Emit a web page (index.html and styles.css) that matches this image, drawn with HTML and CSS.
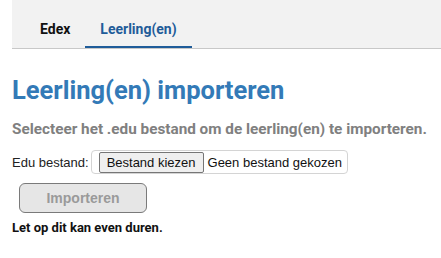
FILE: index.html
```html
<!DOCTYPE html>
<html lang="nl">
<head>
  <meta charset="UTF-8">
  <title>Leerling(en) importeren</title>
  <link rel="stylesheet" href="styles.css">
</head>
<body>

  <!-- Tabbladen -->
  <nav class="tabs">
    <a class="tab" href="#">Edex</a>
    <a class="tab active" href="#">Leerling(en)</a>
  </nav>

  <div class="content">
    <h1 class="title">Leerling(en) importeren</h1>
    <p class="subtitle">Selecteer het .edu bestand om de leerling(en) te importeren.</p>

    <form class="import-form">
      <div class="field">
        <label for="edufile">Edu bestand:</label>
        <span class="file-box">
          <span class="file-button">Bestand kiezen</span>
          <span class="file-name">Geen bestand gekozen</span>
        </span>
      </div>
      <button type="button" class="button" disabled>Importeren</button>
      <p class="note">Let op dit kan even duren.</p>
    </form>
  </div>

</body>
</html>
```
FILE: styles.css
```css
* {
  margin: 0;
  padding: 0;
  box-sizing: border-box;
}

body {
  padding-left: 12px;
  font-family: Roboto, Arial, sans-serif;
  background: #fff;
}

.tabs {
  display: flex;
  height: 49px;
  padding-left: 13px;
  background-color: #f2f2f2;
  border-bottom: 1px solid #c8c8c8;
}

.tab {
  display: flex;
  align-items: flex-start;
  padding: 21px 15px 0;
  font-size: 14px;
  font-weight: bold;
  color: #111;
  text-decoration: none;
  border-bottom: 2px solid transparent;
}

.tab.active {
  color: #1f5c99;
  border-bottom-color: #1f5c99;
}

.title {
  margin-top: 26px;
  font-size: 25.5px;
  font-weight: bold;
  color: #337ab7;
}

.subtitle {
  margin-top: 15px;
  font-size: 15.3px;
  font-weight: bold;
  color: #808080;
}

.import-form {
  margin-top: 12px;
  font-family: Arial, "Liberation Sans", sans-serif;
}

.field {
  display: flex;
  align-items: center;
  font-size: 13px;
  color: #222;
}

.field label {
  margin-right: 2px;
}

.file-box {
  display: flex;
  align-items: center;
  height: 24px;
  padding: 0 5px 0 7px;
  border: 1px solid #d4d4d4;
  border-radius: 4px;
  font-size: 13px;
  color: #111;
}

.file-button {
  padding: 2px 7px;
  margin-right: 4px;
  background-color: #efefef;
  border: 1px solid #767676;
  border-radius: 2px;
}

.button {
  display: block;
  width: 128px;
  height: 30px;
  margin: 9px 0 0 7px;
  background-color: #e6e6e6;
  border: 1px solid #7a7a7a;
  border-radius: 6px;
  font-family: Arial, "Liberation Sans", sans-serif;
  font-size: 14px;
  font-weight: bold;
  color: #9a9a9a;
}

.note {
  margin-top: 7px;
  font-family: Roboto, Arial, sans-serif;
  font-size: 13px;
  font-weight: bold;
  color: #111;
}
```
